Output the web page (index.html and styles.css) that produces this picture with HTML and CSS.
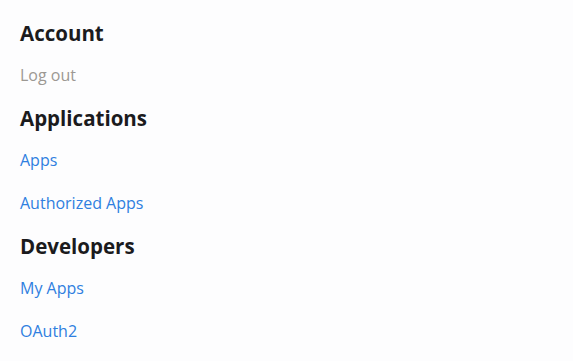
FILE: index.html
```html
<!DOCTYPE html>
<html lang="en">
<head>
    <meta charset="UTF-8">
    <title>Settings</title>
    <link rel="stylesheet" href="styles.css">
</head>
<body>
    <div class="menu">
        <div class="section">
            <div class="heading">Account</div>
            <a href="#" class="item item-muted">Log out</a>
        </div>
        <div class="section">
            <div class="heading">Applications</div>
            <a href="#" class="item">Apps</a>
            <a href="#" class="item">Authorized Apps</a>
        </div>
        <div class="section">
            <div class="heading">Developers</div>
            <a href="#" class="item">My Apps</a>
            <a href="#" class="item">OAuth2</a>
        </div>
    </div>
</body>
</html>
```

FILE: styles.css
```css
body {
    margin: 0;
    background: #fdfdfe;
    font-family: "Open Sans", sans-serif;
}

.menu {
    padding: 12px 20px;
}

.section {
    display: flex;
    flex-direction: column;
}

.heading {
    font-size: 20.5px;
    font-weight: 700;
    color: #1b1b1d;
    line-height: 42px;
}

.item {
    font-size: 16px;
    line-height: 43px;
    color: #2f7fe0;
    text-decoration: none;
}

.item-muted {
    color: #9c9893;
}
```
